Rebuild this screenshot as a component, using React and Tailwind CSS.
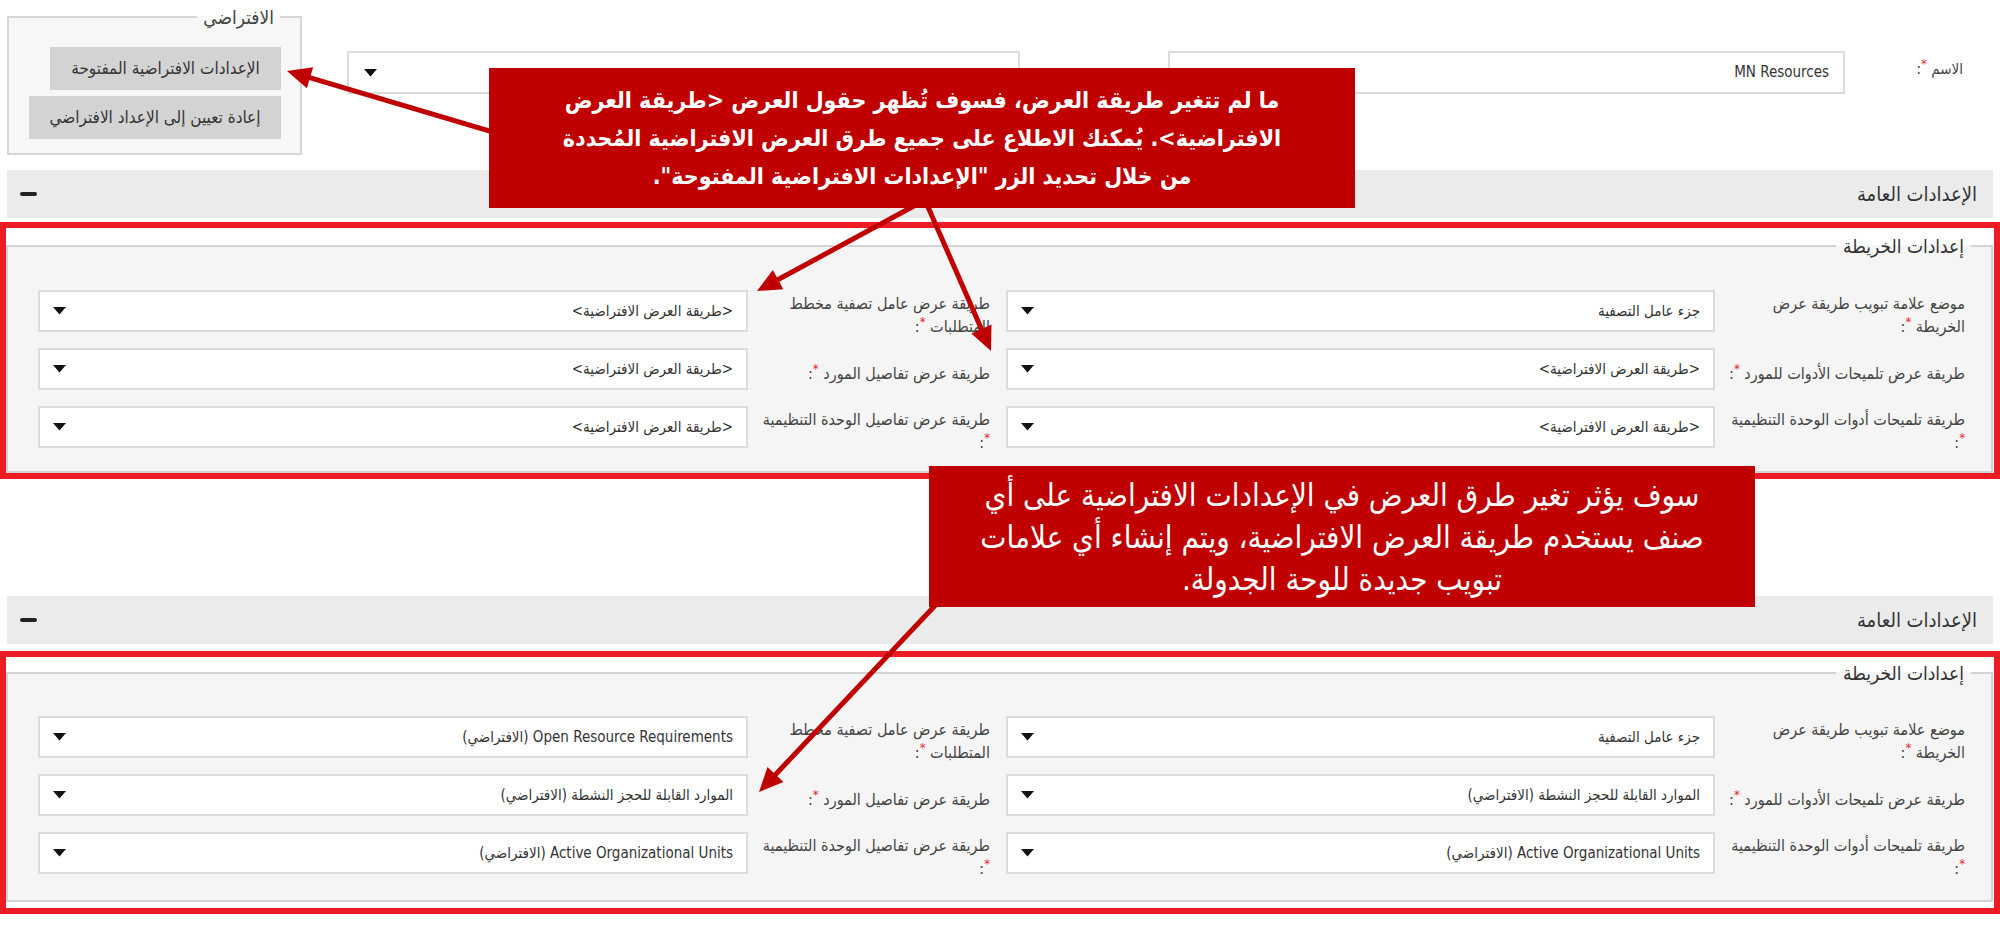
import React from "react";

const AR = "font-['DejaVu_Sans_Condensed','DejaVu_Sans',sans-serif]";

function Star() {
  return <span className="text-[#e5242b] align-super text-[13px] leading-none">*</span>;
}

function Caret() {
  return (
    <svg width="13" height="8" viewBox="0 0 13 8" className="shrink-0">
      <polygon points="0,0 13,0 6.5,7.5" fill="#111" />
    </svg>
  );
}

function Select({ value, w }) {
  return (
    <div className={`${w} h-[42px] shrink-0 bg-white border-2 border-[#dcdcdc] flex items-center justify-between pr-[13px] pl-[13px]`}>
      <span className="text-[15px] text-[#333] whitespace-nowrap">{value}</span>
      <Caret />
    </div>
  );
}

function Label({ lines, w }) {
  return (
    <div className={`${w} shrink-0 pt-[10px] text-[16px] leading-[22px] text-[#444] whitespace-nowrap`}>
      {lines.map((l, i) => (
        <div key={i}>
          {l}
          {i === lines.length - 1 && (
            <>
              {l ? " " : ""}
              <Star />:
            </>
          )}
        </div>
      ))}
    </div>
  );
}

function Row({ r, l }) {
  return (
    <div className="h-[42px] flex items-center">
      <Label lines={r.label} w="w-[250px]" />
      <Select value={r.value} w="w-[709px]" />
      <div className="w-[258px] shrink-0 flex pr-[16px]">
        <Label lines={l.label} w="w-[242px]" />
      </div>
      <Select value={l.value} w="w-[710px]" />
    </div>
  );
}

function GeneralBar() {
  return (
    <div className="mx-[7px] h-[48px] bg-[#ebebeb] flex items-center justify-between pr-[16px] pl-[13px]">
      <span className="text-[20px] text-[#333]">الإعدادات العامة</span>
      <span className="w-[17px] h-[4px] rounded-full bg-[#222]" />
    </div>
  );
}

function MapSection({ rows, top, inner, bottom }) {
  return (
    <div className={`border-[6px] border-[#ed1c24] bg-white ${top}`}>
      <fieldset className="mr-[1px] border-2 border-[#d3d3d3] bg-[#f5f5f5] p-0 m-0 min-w-0">
        <legend className="mr-[20px] px-[7px] text-[19px] leading-[24px] text-[#333]">إعدادات الخريطة</legend>
        <div className={`pr-[26px] flex flex-col gap-[16px] ${inner}`}>
          {rows.map((row, i) => (
            <Row key={i} r={row[0]} l={row[1]} />
          ))}
        </div>
      </fieldset>
      <div className={bottom} />
    </div>
  );
}

function Arrow({ x1, y1, x2, y2 }) {
  const dx = x2 - x1;
  const dy = y2 - y1;
  const len = Math.hypot(dx, dy);
  const ux = dx / len;
  const uy = dy / len;
  const hl = 24;
  const hw = 11;
  const bx = x2 - ux * hl;
  const by = y2 - uy * hl;
  const px = -uy;
  const py = ux;
  const pts = `${x2},${y2} ${bx + px * hw},${by + py * hw} ${bx - px * hw},${by - py * hw}`;
  return (
    <g>
      <line x1={x1} y1={y1} x2={bx + ux * 3} y2={by + uy * 3} stroke="#c00000" strokeWidth="5" />
      <polygon points={pts} fill="#c00000" />
    </g>
  );
}

const DEF = "<طريقة العرض الافتراضية>";

const rows1 = [
  [
    { label: ["موضع علامة تبويب طريقة عرض", "الخريطة"], value: "جزء عامل التصفية" },
    { label: ["طريقة عرض عامل تصفية مخطط", "المتطلبات"], value: DEF },
  ],
  [
    { label: ["طريقة عرض تلميحات الأدوات للمورد"], value: DEF },
    { label: ["طريقة عرض تفاصيل المورد"], value: DEF },
  ],
  [
    { label: ["طريقة تلميحات أدوات الوحدة التنظيمية", ""], value: DEF },
    { label: ["طريقة عرض تفاصيل الوحدة التنظيمية", ""], value: DEF },
  ],
];

const rows2 = [
  [
    { label: ["موضع علامة تبويب طريقة عرض", "الخريطة"], value: "جزء عامل التصفية" },
    { label: ["طريقة عرض عامل تصفية مخطط", "المتطلبات"], value: "Open Resource Requirements (الافتراضي)" },
  ],
  [
    { label: ["طريقة عرض تلميحات الأدوات للمورد"], value: "الموارد القابلة للحجز النشطة (الافتراضي)" },
    { label: ["طريقة عرض تفاصيل المورد"], value: "الموارد القابلة للحجز النشطة (الافتراضي)" },
  ],
  [
    { label: ["طريقة تلميحات أدوات الوحدة التنظيمية", ""], value: "Active Organizational Units (الافتراضي)" },
    { label: ["طريقة عرض تفاصيل الوحدة التنظيمية", ""], value: "Active Organizational Units (الافتراضي)" },
  ],
];

export default function App() {
  return (
    <div dir="rtl" className={`relative w-[2000px] h-[931px] overflow-hidden bg-white ${AR}`}>
      {/* top row */}
      <div className="flex items-start pt-[5px] pr-[37px]">
        <div className="w-[118px] shrink-0 mt-[52px] text-[15px] text-[#444] whitespace-nowrap">
          الاسم <Star />:
        </div>
        <div className="w-[677px] h-[43px] shrink-0 mt-[46px] bg-white border-2 border-[#dcdcdc] flex items-center pr-[14px]">
          <span className="text-[15px] text-[#333]">MN Resources</span>
        </div>
        <div className="w-[148px] shrink-0" />
        <div className="w-[673px] h-[43px] shrink-0 mt-[46px] bg-white border-2 border-[#dcdcdc] flex items-center justify-end pl-[15px]">
          <Caret />
        </div>
        <div className="w-[45px] shrink-0" />
        <fieldset className="w-[295px] shrink-0 border-2 border-[#d6d6d6] bg-[#f7f7f7] p-0 m-0 min-w-0">
          <legend className="mr-[20px] px-[6px] text-[19px] leading-[24px] text-[#444]">الافتراضي</legend>
          <div className="flex flex-col items-start gap-[6px] pr-[19px] pt-[18px] pb-[14px]">
            <div className="w-[231px] h-[43px] bg-[#d3d3d3] flex items-center justify-center text-[17px] text-[#333] whitespace-nowrap">
              الإعدادات الافتراضية المفتوحة
            </div>
            <div className="w-[252px] h-[43px] bg-[#d3d3d3] flex items-center justify-center text-[17px] text-[#333] whitespace-nowrap">
              إعادة تعيين إلى الإعداد الافتراضي
            </div>
          </div>
        </fieldset>
      </div>

      <div className="mt-[15px]">
        <GeneralBar />
      </div>
      <MapSection rows={rows1} top="mt-[4px] pt-[6px]" inner="pt-[32px] pb-[23px]" bottom="h-0" />

      <div className="mt-[117px]">
        <GeneralBar />
      </div>
      <MapSection rows={rows2} top="mt-[7px] pt-[4px]" inner="pt-[31px] pb-[26px]" bottom="h-[6px]" />

      {/* annotation arrows */}
      <svg className="absolute left-0 top-0 pointer-events-none" width="2000" height="931" viewBox="0 0 2000 931">
        <Arrow x1={520} y1={140} x2={287} y2={71} />
        <Arrow x1={925} y1={200} x2={757} y2={291} />
        <Arrow x1={925} y1={200} x2={991} y2={351} />
        <Arrow x1={945} y1={595} x2={759} y2={792} />
      </svg>

      {/* callouts */}
      <div className="absolute left-[489px] top-[68px] w-[866px] h-[140px] bg-[#c00000] text-white text-center font-bold text-[23px] leading-[38px] flex flex-col justify-center whitespace-nowrap">
        <div>ما لم تتغير طريقة العرض، فسوف تُظهر حقول العرض &lt;طريقة العرض</div>
        <div>الافتراضية&gt;. يُمكنك الاطلاع على جميع طرق العرض الافتراضية المُحددة</div>
        <div>من خلال تحديد الزر "الإعدادات الافتراضية المفتوحة".</div>
      </div>
      <div className="absolute left-[929px] top-[466px] w-[826px] h-[141px] bg-[#c00000] text-white text-center text-[31px] leading-[42px] flex flex-col justify-center whitespace-nowrap">
        <div>سوف يؤثر تغير طرق العرض في الإعدادات الافتراضية على أي</div>
        <div>صنف يستخدم طريقة العرض الافتراضية، ويتم إنشاء أي علامات</div>
        <div>تبويب جديدة للوحة الجدولة.</div>
      </div>
    </div>
  );
}
